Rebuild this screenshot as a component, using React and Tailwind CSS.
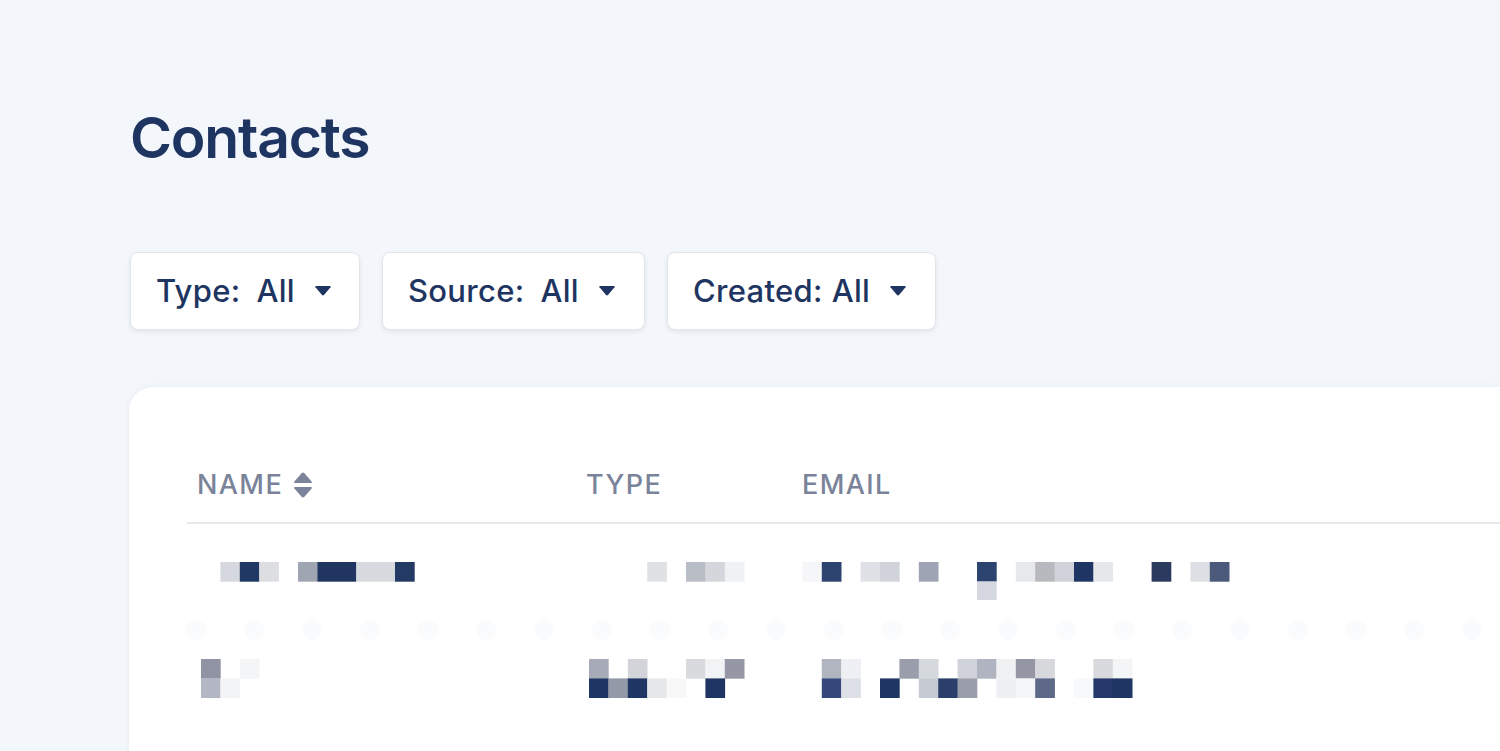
import { useState } from 'react';

const STEP = 19.4;

// blurred row data: [col, color] per line
const rows = [
  [
    [
      [1, '#d5d8de'], [2, '#1f3864'], [3, '#dcdee2'],
      [5, '#a0a5b2'], [6, '#20355f'], [7, '#20355f'], [8, '#d6d9de'], [9, '#d6d9de'], [10, '#233a64'],
      [23, '#dfe1e4'], [25, '#b9bdc6'], [26, '#d3d6db'], [27, '#f0f1f3'],
      [31, '#f5f6f8'], [32, '#2e4470'], [34, '#dfe1e6'], [35, '#d0d4da'], [37, '#9ea4b4'],
      [40, '#2e4470'], [42, '#e6e8eb'], [43, '#b8b9be'], [44, '#cfd2d8'], [45, '#1f3563'], [46, '#e5e7eb'],
      [49, '#2b3b5f'], [51, '#dcdfe4'], [52, '#4b5a7a'],
    ],
    [[40, '#d5d8e0']],
  ],
  [
    [
      [0, '#8f93a3'], [2, '#f4f5f6'],
      [20, '#a7abb8'], [22, '#d2d4d9'], [25, '#d8dadd'], [26, '#f2f3f4'], [27, '#9697a6'],
      [32, '#b0b5c0'], [33, '#eef0f3'], [36, '#9a9dac'], [37, '#d5d8dd'], [39, '#d0d3d9'], [40, '#b0b4c1'],
      [41, '#f0f1f3'], [42, '#9496a4'], [43, '#d6d8dc'], [46, '#d8dadd'], [47, '#f4f5f6'],
    ],
    [
      [0, '#b3b6c3'], [1, '#f3f4f5'],
      [20, '#1f3563'], [21, '#9499a8'], [22, '#1f3563'], [23, '#e6e7ea'], [24, '#f8f8f9'], [26, '#1f3563'],
      [32, '#34497a'], [33, '#dde0e6'], [35, '#1f3563'], [37, '#c5cad3'], [38, '#2b3f6b'], [39, '#9a9eab'],
      [41, '#eff0f3'], [42, '#f5f6f7'], [43, '#5d6888'], [45, '#f8f9fa'], [46, '#24386a'], [47, '#1f3563'],
    ],
  ],
];

function Mosaic({ lines }) {
  return (
    <svg width="1100" height={lines.length * 19.4} className="block">
      {lines.map((line, li) =>
        line.map(([c, color]) => (
          <rect key={li + '-' + c} x={c * STEP} y={li * 19.4} width={STEP + 0.3} height="19.7" fill={color} />
        ))
      )}
    </svg>
  );
}

function Caret() {
  return (
    <svg width="18" height="10" viewBox="0 0 18 10" className="ml-[19px]">
      <path d="M1.5 1.2 Q0.8 0 2.2 0 H15.8 Q17.2 0 16.5 1.2 L10.2 8.8 Q9 10 7.8 8.8 Z" fill="#1e3461" />
    </svg>
  );
}

function SortIcon() {
  return (
    <svg width="20" height="26" viewBox="0 0 20 26" className="ml-[10px]">
      <path d="M8.6 1.2 Q10 -0.2 11.4 1.2 L18.6 9.6 Q19.4 11 17.8 11 H2.2 Q0.6 11 1.4 9.6 Z" fill="#7a8399" />
      <path d="M8.6 24.8 Q10 26.2 11.4 24.8 L18.6 16.4 Q19.4 15 17.8 15 H2.2 Q0.6 15 1.4 16.4 Z" fill="#7a8399" />
    </svg>
  );
}

function Filter({ label, value, w, gap }) {
  return (
    <button
      type="button"
      className={`${w} h-[78px] flex items-center pl-[25px] bg-white rounded-[8px] border border-[#e2e6ec] shadow-[0_2px_4px_rgba(30,52,97,0.08)] text-[31px] font-medium text-[#1e3461] tracking-[0.3px]`}
    >
      <span>{label}</span>
      <span style={{ width: gap }} />
      <span>{value}</span>
      <Caret />
    </button>
  );
}

export default function App() {
  const [sort, setSort] = useState('asc');
  const dots = Array.from({ length: 23 });

  return (
    <div className="w-[1500px] h-[751px] overflow-hidden bg-[#f3f6fa] pl-[129px] pt-[98px]" style={{ fontFamily: 'Inter, "Noto Sans", sans-serif' }}>
      <h1 className="text-[57px] leading-[80px] font-semibold text-[#1e3461] tracking-[-1.2px] pl-[1px]">Contacts</h1>

      <div className="flex gap-[22px] mt-[74px] pl-[1px]">
        <Filter label="Type:" value="All" w="w-[230px]" gap={16} />
        <Filter label="Source:" value="All" w="w-[263px]" gap={16} />
        <Filter label="Created:" value="All" w="w-[269px]" gap={9} />
      </div>

      <div className="mt-[57px] bg-white rounded-tl-[24px] h-[400px] pl-[58px] pt-[78px] shadow-[0_0_6px_rgba(30,52,97,0.06)]">
        <div className="grid grid-cols-[389px_216px_1fr] border-b-2 border-[#e6e8ec] pb-[16px] text-[27px] font-medium tracking-[1.4px] text-[#7a8399]">
          <button type="button" onClick={() => setSort(sort === 'asc' ? 'desc' : 'asc')} className="flex items-center pl-[10px] text-left">
            NAME
            <SortIcon />
          </button>
          <div className="pl-[10px]">TYPE</div>
          <div className="pl-[10px]">EMAIL</div>
        </div>

        <div className="pl-[14px] pt-[38px]">
          <Mosaic lines={rows[0]} />
        </div>

        <div className="flex gap-[38px] pt-[20px] -ml-[1px]">
          {dots.map((_, i) => (
            <div key={i} className="w-[20px] h-[20px] rounded-full bg-[#fafbfc]" />
          ))}
        </div>

        <div className="pl-[14px] pt-[19px]">
          <Mosaic lines={rows[1]} />
        </div>
      </div>
    </div>
  );
}
